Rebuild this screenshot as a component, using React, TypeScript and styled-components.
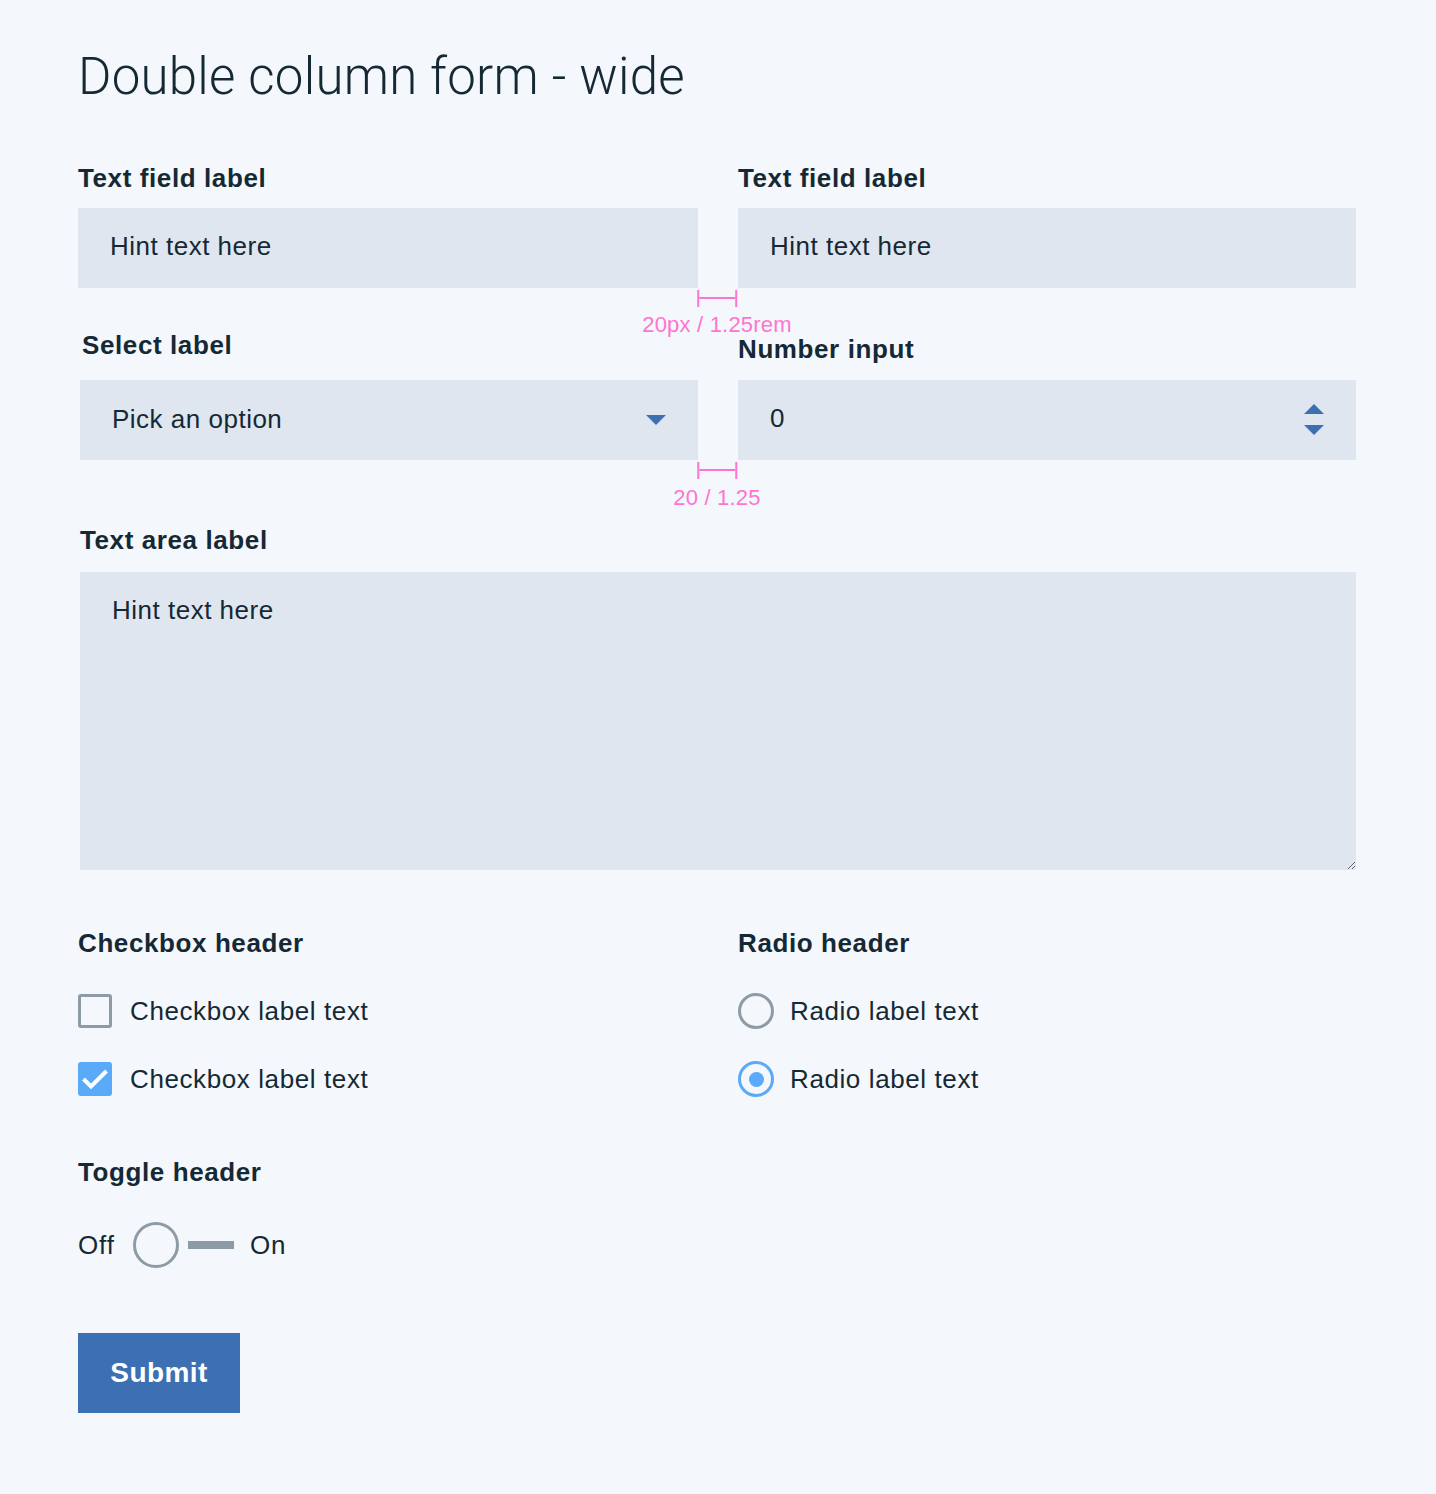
import React from "react";
import styled, { createGlobalStyle } from "styled-components";

const GlobalStyle = createGlobalStyle`
  html, body {
    margin: 0;
    padding: 0;
    background: #f4f7fb;
  }
  body {
    font-family: "Liberation Sans", Arial, sans-serif;
    color: #152935;
  }
  * {
    box-sizing: border-box;
  }
`;

const Page = styled.main`
  width: 1436px;
  min-height: 1494px;
  padding: 47px 80px 80px 78px;
`;

const Title = styled.h1`
  margin: 0 0 58px;
  font-family: Roboto, "Liberation Sans", sans-serif;
  font-weight: 300;
  font-size: 51px;
  line-height: 60px;
  letter-spacing: 0.25px;
`;

const Row = styled.div<{ $gap: number }>`
  position: relative;
  display: grid;
  grid-template-columns: 620px 618px;
  column-gap: 40px;
  margin-bottom: ${(p) => p.$gap}px;
`;

const Field = styled.div<{ $gap?: number }>`
  display: flex;
  flex-direction: column;
  margin-bottom: ${(p) => p.$gap ?? 0}px;
`;

const Label = styled.label<{ $indent?: number; $drop?: number; $space?: number }>`
  display: block;
  margin: ${(p) => p.$drop ?? 0}px 0 ${(p) => p.$space ?? 15}px ${(p) => p.$indent ?? 0}px;
  font-size: 26px;
  line-height: 30px;
  font-weight: 700;
  letter-spacing: 0.6px;
`;

const fieldBase = `
  height: 80px;
  border: none;
  outline: none;
  background: #dfe6f0;
  padding: 0 32px 3px;
  font-family: "Liberation Sans", Arial, sans-serif;
  font-size: 26px;
  letter-spacing: 0.5px;
  color: #152935;
  border-radius: 0;
`;

const TextInput = styled.input`
  ${fieldBase}
  width: 100%;
  &::placeholder {
    color: #152935;
    opacity: 1;
  }
`;

const SelectWrap = styled.div<{ $indent?: number }>`
  position: relative;
  margin-left: ${(p) => p.$indent ?? 0}px;
`;

const Select = styled.select`
  ${fieldBase}
  width: 100%;
  appearance: none;
  -webkit-appearance: none;
`;

const Caret = styled.svg`
  position: absolute;
  right: 32px;
  top: 35px;
  pointer-events: none;
`;

const NumberInput = styled.input`
  ${fieldBase}
  width: 100%;
  -moz-appearance: textfield;
  &::-webkit-inner-spin-button,
  &::-webkit-outer-spin-button {
    -webkit-appearance: none;
    margin: 0;
  }
`;

const Spinner = styled.div`
  position: absolute;
  right: 32px;
  top: 24px;
  display: flex;
  flex-direction: column;
  gap: 11px;
`;

const TextArea = styled.textarea`
  ${fieldBase}
  display: block;
  width: 1276px;
  height: 298px;
  margin-left: 2px;
  padding: 23px 32px;
  line-height: 30px;
  resize: both;
  &::placeholder {
    color: #152935;
    opacity: 1;
  }
`;

const Annotation = styled.div<{ $textGap: number }>`
  position: absolute;
  top: calc(100% + 2px);
  left: 50%;
  transform: translateX(-50%);
  display: flex;
  flex-direction: column;
  align-items: center;
  gap: ${(p) => p.$textGap}px;
  color: #ff74d1;
  font-size: 22px;
  line-height: 24px;
  letter-spacing: 0.2px;
  white-space: nowrap;
  pointer-events: none;
`;

const Ruler = styled.div`
  position: relative;
  width: 40px;
  height: 17px;
  border-left: 2px solid #ff74d1;
  border-right: 2px solid #ff74d1;
  &::after {
    content: "";
    position: absolute;
    left: 0;
    right: 0;
    top: 7px;
    height: 2px;
    background: #ff74d1;
  }
`;

const Group = styled.div`
  display: flex;
  flex-direction: column;
`;

const Header = styled.h3<{ $space: number }>`
  margin: 0 0 ${(p) => p.$space}px;
  font-size: 26px;
  line-height: 30px;
  font-weight: 700;
  letter-spacing: 0.6px;
`;

const OptionList = styled.div`
  display: flex;
  flex-direction: column;
  gap: 34px;
`;

const Option = styled.label<{ $gap?: number }>`
  display: flex;
  align-items: center;
  gap: ${(p) => p.$gap ?? 18}px;
  height: 34px;
  font-size: 26px;
  line-height: 30px;
  letter-spacing: 0.6px;
`;

const Box = styled.span<{ $checked?: boolean }>`
  display: flex;
  align-items: center;
  justify-content: center;
  width: 34px;
  height: 34px;
  border-radius: 3px;
  border: ${(p) => (p.$checked ? "none" : "3px solid #8c9ba5")};
  background: ${(p) => (p.$checked ? "#5aaafa" : "transparent")};
`;

const Radio = styled.span<{ $checked?: boolean }>`
  display: flex;
  align-items: center;
  justify-content: center;
  width: 36px;
  height: 36px;
  border-radius: 50%;
  border: 3px solid ${(p) => (p.$checked ? "#5aaafa" : "#8c9ba5")};
  &::after {
    content: "";
    display: ${(p) => (p.$checked ? "block" : "none")};
    width: 15px;
    height: 15px;
    border-radius: 50%;
    background: #5aaafa;
  }
`;

const ToggleRow = styled.div`
  display: flex;
  align-items: center;
  height: 46px;
  font-size: 26px;
  line-height: 30px;
  letter-spacing: 0.9px;
`;

const Knob = styled.span`
  width: 46px;
  height: 46px;
  border-radius: 50%;
  border: 3px solid #8c9ba5;
  margin: 0 9px 0 18px;
`;

const Track = styled.span`
  width: 46px;
  height: 8px;
  background: #8c9ba5;
  margin-right: 16px;
`;

const SubmitButton = styled.button`
  width: 162px;
  height: 80px;
  margin-top: 65px;
  border: none;
  background: #3d70b2;
  color: #ffffff;
  font-family: "Liberation Sans", Arial, sans-serif;
  font-size: 28px;
  font-weight: 700;
  letter-spacing: 0.4px;
  cursor: pointer;
`;

const Triangle = ({ up }: { up?: boolean }) => (
  <svg width="20" height="10" viewBox="0 0 20 10">
    <path d={up ? "M0 10 L10 0 L20 10 Z" : "M0 0 L20 0 L10 10 Z"} fill="#3d70b2" />
  </svg>
);

const Check = () => (
  <svg width="30" height="22" viewBox="0 0 30 22">
    <path d="M3.5 11 L11 18.5 L26.5 3" stroke="#ffffff" strokeWidth="4" fill="none" strokeLinecap="butt" strokeLinejoin="miter" />
  </svg>
);

export default function App() {
  return (
    <>
      <GlobalStyle />
      <Page>
        <Title>Double column form - wide</Title>

        <Row $gap={44}>
          <Field>
            <Label $drop={-2}>Text field label</Label>
            <TextInput placeholder="Hint text here" />
          </Field>
          <Field>
            <Label $drop={-2}>Text field label</Label>
            <TextInput placeholder="Hint text here" />
          </Field>
          <Annotation $textGap={6}>
            <Ruler />
            <span>20px / 1.25rem</span>
          </Annotation>
        </Row>

        <Row $gap={67}>
          <Field>
            <Label $indent={4} $drop={-2} $space={20}>Select label</Label>
            <SelectWrap $indent={2}>
              <Select defaultValue="">
                <option value="">Pick an option</option>
                <option value="a">Option A</option>
                <option value="b">Option B</option>
              </Select>
              <Caret width="20" height="10" viewBox="0 0 20 10">
                <path d="M0 0 L20 0 L10 10 Z" fill="#3d70b2" />
              </Caret>
            </SelectWrap>
          </Field>
          <Field>
            <Label $drop={2} $space={16}>Number input</Label>
            <SelectWrap>
              <NumberInput type="number" defaultValue={0} />
              <Spinner>
                <Triangle up />
                <Triangle />
              </Spinner>
            </SelectWrap>
          </Field>
          <Annotation $textGap={7}>
            <Ruler />
            <span>20 / 1.25</span>
          </Annotation>
        </Row>

        <Field $gap={58}>
          <Label $indent={2} $drop={-2} $space={17}>Text area label</Label>
          <TextArea placeholder="Hint text here" />
        </Field>

        <Row $gap={61}>
          <Group>
            <Header $space={36}>Checkbox header</Header>
            <OptionList>
              <Option>
                <Box />
                Checkbox label text
              </Option>
              <Option>
                <Box $checked>
                  <Check />
                </Box>
                Checkbox label text
              </Option>
            </OptionList>
          </Group>
          <Group>
            <Header $space={36}>Radio header</Header>
            <OptionList>
              <Option $gap={16}>
                <Radio />
                Radio label text
              </Option>
              <Option $gap={16}>
                <Radio $checked />
                Radio label text
              </Option>
            </OptionList>
          </Group>
        </Row>

        <Group>
          <Header $space={35}>Toggle header</Header>
          <ToggleRow>
            <span>Off</span>
            <Knob />
            <Track />
            <span>On</span>
          </ToggleRow>
        </Group>

        <SubmitButton type="button">Submit</SubmitButton>
      </Page>
    </>
  );
}
